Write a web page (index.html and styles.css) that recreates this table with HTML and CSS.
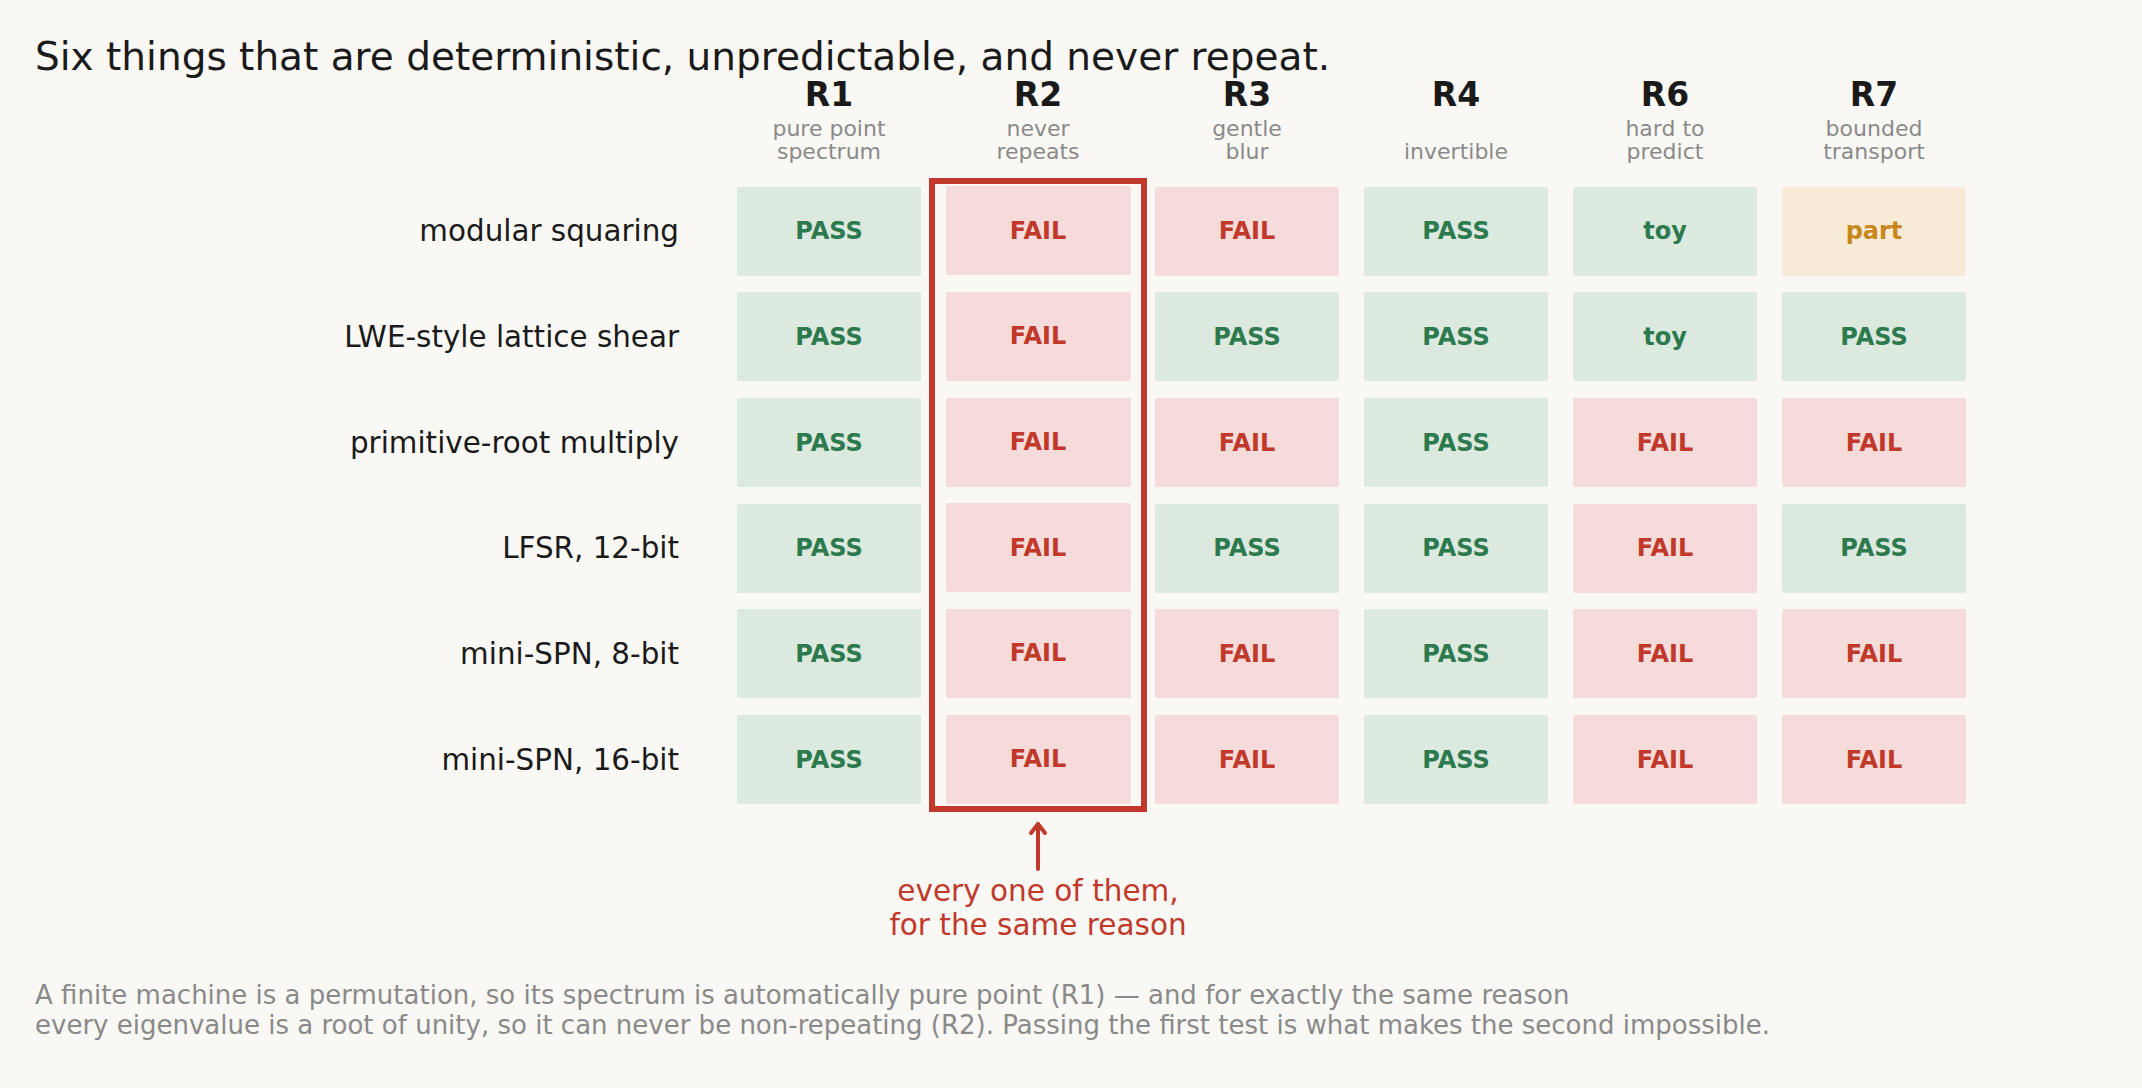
FILE: index.html
```html
<!DOCTYPE html>
<html>
<head>
<meta charset="utf-8">
<link rel="stylesheet" href="styles.css">
</head>
<body>
<div class="page">
  <h1 class="title">Six things that are deterministic, unpredictable, and never repeat.</h1>
  <div class="table">
    <div class="labels">
      <div class="label">modular squaring</div>
      <div class="label">LWE-style lattice shear</div>
      <div class="label">primitive-root multiply</div>
      <div class="label">LFSR, 12-bit</div>
      <div class="label">mini-SPN, 8-bit</div>
      <div class="label">mini-SPN, 16-bit</div>
    </div>

    <div class="col">
      <div class="head"><div class="rname">R1</div><div class="rsub">pure point<br>spectrum</div></div>
      <div class="cells">
        <div class="cell pass">PASS</div><div class="cell pass">PASS</div><div class="cell pass">PASS</div><div class="cell pass">PASS</div><div class="cell pass">PASS</div><div class="cell pass">PASS</div>
      </div>
    </div>

    <div class="col">
      <div class="head"><div class="rname">R2</div><div class="rsub">never<br>repeats</div></div>
      <div class="cells box">
        <div class="cell fail">FAIL</div><div class="cell fail">FAIL</div><div class="cell fail">FAIL</div><div class="cell fail">FAIL</div><div class="cell fail">FAIL</div><div class="cell fail">FAIL</div>
      </div>
      <div class="note">
        <svg class="arrow" width="24" height="54" viewBox="0 0 24 54">
          <path d="M12 4 L12 49" stroke="#c0392b" stroke-width="4" stroke-linecap="round" fill="none"/>
          <path d="M5 13 L12 4 L19 13" stroke="#c0392b" stroke-width="4" stroke-linecap="round" stroke-linejoin="round" fill="none"/>
        </svg>
        <div class="note-text">every one of them,<br>for the same reason</div>
      </div>
    </div>

    <div class="col">
      <div class="head"><div class="rname">R3</div><div class="rsub">gentle<br>blur</div></div>
      <div class="cells">
        <div class="cell fail">FAIL</div><div class="cell pass">PASS</div><div class="cell fail">FAIL</div><div class="cell pass">PASS</div><div class="cell fail">FAIL</div><div class="cell fail">FAIL</div>
      </div>
    </div>

    <div class="col">
      <div class="head"><div class="rname">R4</div><div class="rsub">&nbsp;<br>invertible</div></div>
      <div class="cells">
        <div class="cell pass">PASS</div><div class="cell pass">PASS</div><div class="cell pass">PASS</div><div class="cell pass">PASS</div><div class="cell pass">PASS</div><div class="cell pass">PASS</div>
      </div>
    </div>

    <div class="col">
      <div class="head"><div class="rname">R6</div><div class="rsub">hard to<br>predict</div></div>
      <div class="cells">
        <div class="cell pass">toy</div><div class="cell pass">toy</div><div class="cell fail">FAIL</div><div class="cell fail">FAIL</div><div class="cell fail">FAIL</div><div class="cell fail">FAIL</div>
      </div>
    </div>

    <div class="col">
      <div class="head"><div class="rname">R7</div><div class="rsub">bounded<br>transport</div></div>
      <div class="cells">
        <div class="cell part">part</div><div class="cell pass">PASS</div><div class="cell fail">FAIL</div><div class="cell pass">PASS</div><div class="cell fail">FAIL</div><div class="cell fail">FAIL</div>
      </div>
    </div>
  </div>
  <p class="footer">A finite machine is a permutation, so its spectrum is automatically pure point (R1) — and for exactly the same reason<br>every eigenvalue is a root of unity, so it can never be non-repeating (R2). Passing the first test is what makes the second impossible.</p>
</div>
</body>
</html>
```

FILE: styles.css
```css
html, body {
  margin: 0;
  padding: 0;
  background: #f9f8f4;
}
body {
  font-family: "DejaVu Sans", sans-serif;
  color: #1a1a1a;
}
.page {
  padding: 37px 0 0 35px;
  width: 2107px;
  height: 1051px;
  overflow: hidden;
}
.title {
  margin: 0 0 -1px 0;
  font-size: 39px;
  line-height: 40px;
  font-weight: normal;
  color: #1a1a1a;
}
.table {
  display: flex;
  align-items: flex-start;
  gap: 25px;
}
.labels {
  width: 644px;
  padding-right: 33px;
  padding-top: 110.7px;
  display: flex;
  flex-direction: column;
  gap: 16.7px;
}
.label {
  height: 89px;
  display: flex;
  align-items: center;
  justify-content: flex-end;
  font-size: 29.4px;
  color: #1a1a1a;
  white-space: nowrap;
}
.col {
  width: 184px;
  display: flex;
  flex-direction: column;
  align-items: center;
}
.head {
  height: 94px;
  display: flex;
  flex-direction: column;
  align-items: center;
  text-align: center;
}
.rname {
  font-size: 33px;
  font-weight: bold;
  line-height: 38px;
  color: #1a1a1a;
}
.rsub {
  margin-top: 3px;
  font-size: 22px;
  line-height: 23px;
  color: #8a8a8a;
}
.cells {
  align-self: stretch;
  margin-top: 16.7px;
  display: flex;
  flex-direction: column;
  gap: 16.7px;
}
.box {
  margin: 7.7px -17px 0 -17px;
  padding: 2.5px 10.5px;
  border: 6.5px solid #c0392b;
}
.cell {
  height: 89px;
  display: flex;
  align-items: center;
  justify-content: center;
  font-size: 24px;
  font-weight: bold;
  border-radius: 2px;
}
.pass { background: #dce9df; color: #2d7a4f; }
.fail { background: #f5dbd9; color: #c0392b; }
.part { background: #f7ead6; color: #c8871c; }
.note {
  margin-top: 8px;
  display: flex;
  flex-direction: column;
  align-items: center;
  width: max-content;
}
.arrow {
  display: block;
}
.note-text {
  font-size: 29.5px;
  line-height: 34px;
  color: #c0392b;
  text-align: center;
  white-space: nowrap;
}
.footer {
  margin: 37.5px 0 0 0;
  font-size: 26px;
  line-height: 30px;
  color: #8a8a8a;
  white-space: nowrap;
}
```
